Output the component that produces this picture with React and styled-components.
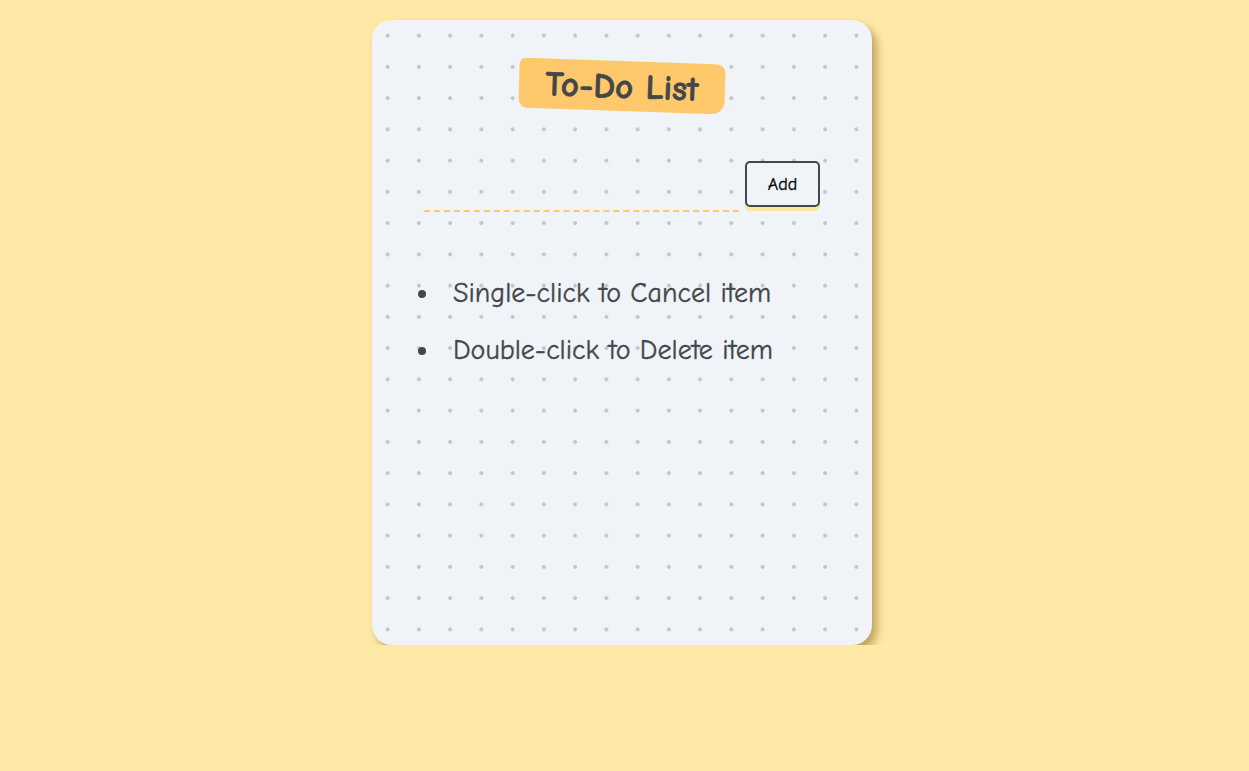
import React, { useState } from 'react';
import styled, { createGlobalStyle } from 'styled-components';

const GlobalStyle = createGlobalStyle`
  html, body {
    margin: 0;
    padding: 0;
    background-color: #ffe9a7;
  }
  body {
    font-family: "Comic Sans MS", "Comic Neue", "Noto Sans", sans-serif;
  }
`;

const Page = styled.div`
  display: flex;
  justify-content: center;
  padding: 20px 5px 0 0;
`;

// Dotted paper card
const Card = styled.div`
  box-sizing: border-box;
  width: 500px;
  height: 625px;
  border-radius: 20px;
  background-color: #f0f4f8;
  background-image: radial-gradient(circle at center, #c3c5c9 1.6px, transparent 2.2px);
  background-size: 31.25px 31.25px;
  box-shadow: 5px 6px 8px rgba(150, 120, 40, 0.6);
  display: flex;
  flex-direction: column;
  align-items: center;
  padding-top: 41px;
`;

const Heading = styled.div`
  width: 206px;
  height: 50px;
  display: flex;
  align-items: center;
  justify-content: center;
  background-color: #ffc86b;
  border-radius: 6px 10px 14px 8px / 6px 8px 12px 10px;
  transform: rotate(2deg);

  h1 {
    margin: 0;
    font-size: 35px;
    font-weight: 700;
    color: #43464b;
    -webkit-text-stroke: 0.6px #43464b;
  }
`;

const Form = styled.div`
  width: 396px;
  margin-top: 50px;
  display: flex;
  align-items: flex-end;
  gap: 6px;
`;

const Input = styled.input`
  flex: 1;
  min-width: 0;
  height: 30px;
  border: none;
  border-bottom: 2px dashed #ffc86b;
  background: transparent;
  outline: none;
  font-family: inherit;
  font-size: 18px;
  color: #43464b;
  margin-bottom: -5px;
`;

const AddButton = styled.button`
  width: 75px;
  height: 46px;
  border: 2px solid #43464b;
  border-radius: 5px;
  background-color: #f0f4f8;
  box-shadow: 0 4px 0 #ffe5a1;
  font-family: "Comic Neue", "Noto Sans", sans-serif;
  font-size: 18px;
  color: #000;
  -webkit-text-stroke: 0.3px #000;
  cursor: pointer;
`;

const List = styled.ul`
  align-self: stretch;
  margin: 66px 0 0 29px;
  padding-left: 40px;
  color: #43464b;
  font-size: 28px;
`;

const Item = styled.li`
  height: 57px;
  line-height: 40px;
  padding-left: 12px;
  -webkit-text-stroke: 0.35px #43464b;
  text-decoration: ${props => (props.done ? 'line-through' : 'none')};
  cursor: pointer;
`;

export default function App() {
  const [text, setText] = useState('');
  const [items, setItems] = useState([
    { id: 1, text: 'Single-click to Cancel item', done: false },
    { id: 2, text: 'Double-click to Delete item', done: false },
  ]);

  const addItem = () => {
    if (!text.trim()) return;
    setItems([...items, { id: Date.now(), text, done: false }]);
    setText('');
  };

  const toggle = id =>
    setItems(items.map(i => (i.id === id ? { ...i, done: !i.done } : i)));

  const remove = id => setItems(items.filter(i => i.id !== id));

  return (
    <Page>
      <GlobalStyle />
      <Card>
        <Heading>
          <h1>To-Do List</h1>
        </Heading>
        <Form>
          <Input value={text} onChange={e => setText(e.target.value)} />
          <AddButton onClick={addItem}>Add</AddButton>
        </Form>
        <List>
          {items.map(item => (
            <Item
              key={item.id}
              done={item.done}
              onClick={() => toggle(item.id)}
              onDoubleClick={() => remove(item.id)}
            >
              {item.text}
            </Item>
          ))}
        </List>
      </Card>
    </Page>
  );
}
